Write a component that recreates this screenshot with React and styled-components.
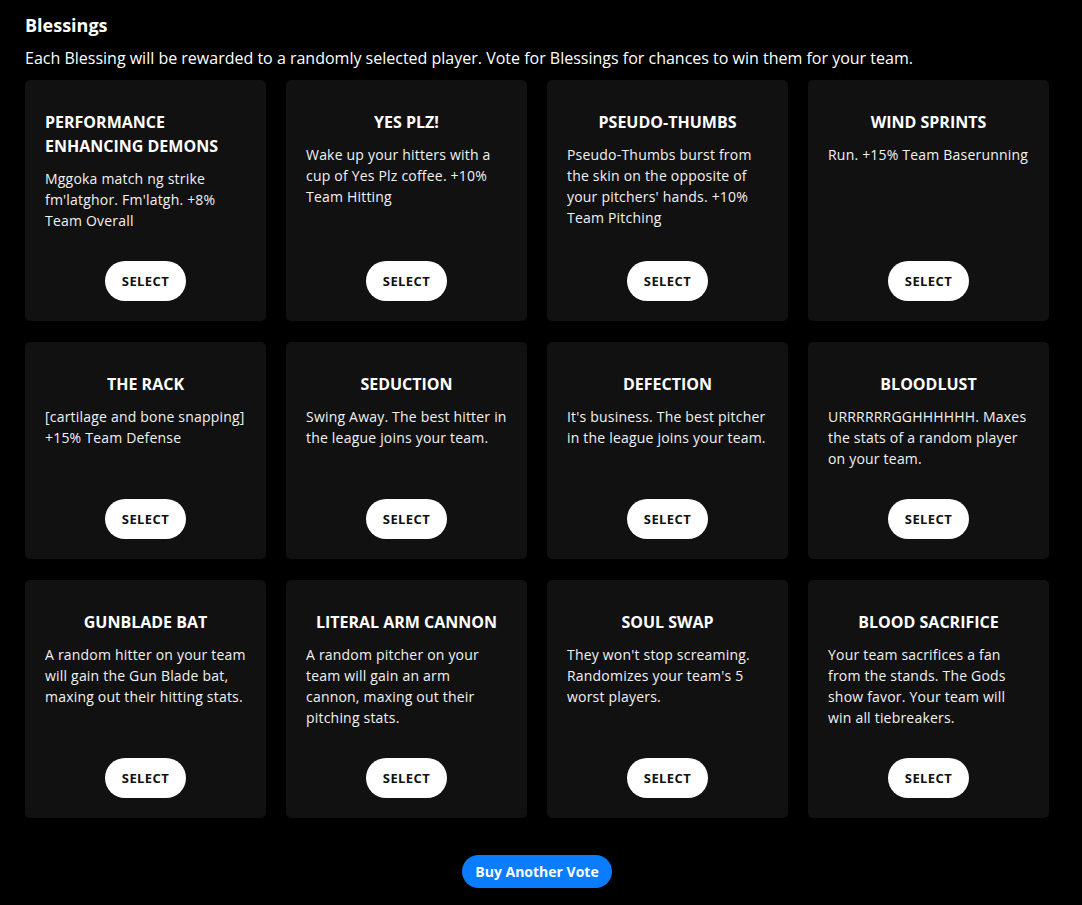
import React from "react";
import styled, { createGlobalStyle } from "styled-components";

const GlobalStyle = createGlobalStyle`
  html, body {
    margin: 0;
    padding: 0;
    background: #000;
  }
  body {
    font-family: "Open Sans", "Noto Sans", sans-serif;
    color: #fff;
  }
`;

const Page = styled.div`
  width: 1024px;
  padding: 12px 25px 17px;
`;

const Heading = styled.h2`
  margin: 0;
  font-size: 18px;
  line-height: 27px;
  font-weight: 700;
`;

const Intro = styled.p`
  margin: 7px 0 10px;
  font-size: 16px;
  line-height: 24px;
`;

const Grid = styled.div`
  display: grid;
  grid-template-columns: repeat(4, 241px);
  column-gap: 20px;
  row-gap: 21px;
`;

const Card = styled.div`
  background-color: #111111;
  border-radius: 5px;
  padding: 30px 20px 20px;
  display: flex;
  flex-direction: column;
  align-items: center;
`;

const Title = styled.h3`
  margin: 0 0 10px;
  font-size: 16px;
  line-height: 24px;
  font-weight: 700;
  text-align: left;
`;

const Description = styled.p`
  margin: 0 0 30px;
  align-self: stretch;
  font-size: 14px;
  line-height: 21px;
  letter-spacing: 0.2px;
  color: #f2f2f2;
`;

const SelectButton = styled.button`
  margin-top: auto;
  height: 40px;
  width: 81px;
  border: none;
  border-radius: 20px;
  background-color: #fff;
  color: #111;
  font-family: inherit;
  font-size: 13px;
  font-weight: 700;
  letter-spacing: 0.4px;
  cursor: pointer;
`;

const Footer = styled.div`
  display: flex;
  justify-content: center;
  margin-top: 37px;
`;

const BuyButton = styled.button`
  height: 33px;
  padding: 0 13px;
  border: none;
  border-radius: 17px;
  background-color: #0a7cff;
  color: #fff;
  font-family: inherit;
  font-size: 14px;
  font-weight: 700;
  cursor: pointer;
`;

const blessings = [
  {
    title: "PERFORMANCE ENHANCING DEMONS",
    text: "Mggoka match ng strike fm'latghor. Fm'latgh. +8% Team Overall",
  },
  {
    title: "YES PLZ!",
    text: "Wake up your hitters with a cup of Yes Plz coffee. +10% Team Hitting",
  },
  {
    title: "PSEUDO-THUMBS",
    text: "Pseudo-Thumbs burst from the skin on the opposite of your pitchers' hands. +10% Team Pitching",
  },
  { title: "WIND SPRINTS", text: "Run. +15% Team Baserunning" },
  {
    title: "THE RACK",
    text: "[cartilage and bone snapping] +15% Team Defense",
  },
  {
    title: "SEDUCTION",
    text: "Swing Away. The best hitter in the league joins your team.",
  },
  {
    title: "DEFECTION",
    text: "It's business. The best pitcher in the league joins your team.",
  },
  {
    title: "BLOODLUST",
    text: "URRRRRRGGHHHHHH. Maxes the stats of a random player on your team.",
  },
  {
    title: "GUNBLADE BAT",
    text: "A random hitter on your team will gain the Gun Blade bat, maxing out their hitting stats.",
  },
  {
    title: "LITERAL ARM CANNON",
    text: "A random pitcher on your team will gain an arm cannon, maxing out their pitching stats.",
  },
  {
    title: "SOUL SWAP",
    text: "They won't stop screaming. Randomizes your team's 5 worst players.",
  },
  {
    title: "BLOOD SACRIFICE",
    text: "Your team sacrifices a fan from the stands. The Gods show favor. Your team will win all tiebreakers.",
  },
];

const App = () => {
  return (
    <>
      <GlobalStyle />
      <Page>
        <Heading>Blessings</Heading>
        <Intro>
          Each Blessing will be rewarded to a randomly selected player. Vote for
          Blessings for chances to win them for your team.
        </Intro>
        <Grid>
          {blessings.map((b) => (
            <Card key={b.title}>
              <Title>{b.title}</Title>
              <Description>{b.text}</Description>
              <SelectButton>SELECT</SelectButton>
            </Card>
          ))}
        </Grid>
        <Footer>
          <BuyButton>Buy Another Vote</BuyButton>
        </Footer>
      </Page>
    </>
  );
};

export default App;
